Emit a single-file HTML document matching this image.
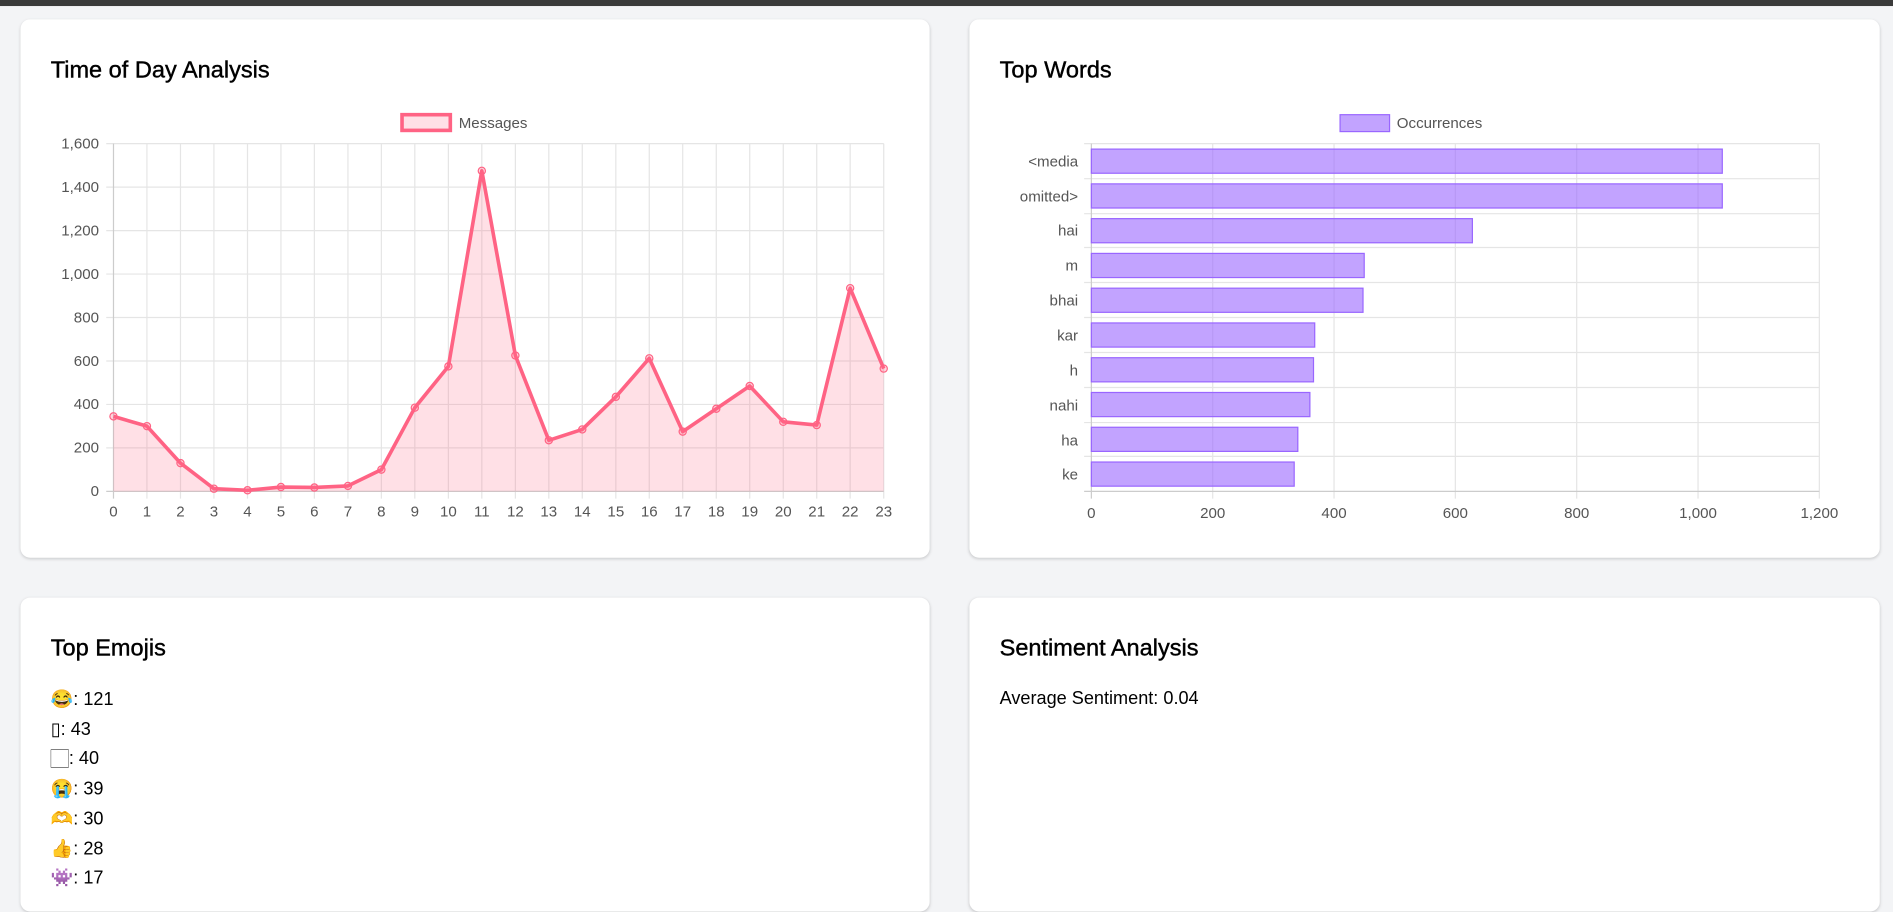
<!DOCTYPE html>
<html><head><meta charset="utf-8"><style>
html,body{margin:0;padding:0;background:#f3f4f6;overflow:hidden}
#w{position:absolute;left:0;top:0;width:1568px;height:731px;transform:scale(1.20727);transform-origin:0 0;background:#f3f4f6;font-family:"Liberation Sans",sans-serif}
.bar{position:absolute;left:0;top:0;width:1568px;height:5px;background:#3a3a3a}
.card{position:absolute;background:#fff;border-radius:8px;box-shadow:0 1px 3px rgba(0,0,0,.12),0 1px 2px rgba(0,0,0,.06)}
h2{position:absolute;left:25px;top:31px;margin:0;font-size:19.5px;font-weight:normal;color:#000;-webkit-text-stroke:0.35px #000}
.t{position:absolute;left:25px;font-size:15px;color:#000}
svg{position:absolute;left:0;top:0}
svg text{font-family:"Liberation Sans",sans-serif;font-size:12.5px;fill:#555}
</style></head><body><div id="w">
<div class="bar"></div>
<div class="card" style="left:17px;top:16px;width:753px;height:446px"><h2>Time of Day Analysis</h2></div>
<div class="card" style="left:803px;top:16px;width:754px;height:446px"><h2>Top Words</h2></div>
<div class="card" style="left:17px;top:495px;width:753px;height:260px"><h2>Top Emojis</h2>
<div class="t" style="top:75px">😂: 121</div>
<div class="t" style="top:100px">▯: 43</div>
<div class="t" style="top:125px">🏻: 40</div>
<div class="t" style="top:149px">😭: 39</div>
<div class="t" style="top:174px">🫶: 30</div>
<div class="t" style="top:199px">👍: 28</div>
<div class="t" style="top:223px">👾: 17</div>
</div>
<div class="card" style="left:803px;top:495px;width:754px;height:260px"><h2>Sentiment Analysis</h2>
<div class="t" style="top:75px">Average Sentiment: 0.04</div></div>

<svg width="1568" height="731">
<g stroke="#e5e5e5" stroke-width="1">
<line x1="88" y1="119" x2="732" y2="119"/><line x1="88" y1="155" x2="732" y2="155"/><line x1="88" y1="191" x2="732" y2="191"/><line x1="88" y1="227" x2="732" y2="227"/><line x1="88" y1="263" x2="732" y2="263"/><line x1="88" y1="299" x2="732" y2="299"/><line x1="88" y1="335" x2="732" y2="335"/><line x1="88" y1="371" x2="732" y2="371"/>
<line x1="121.7" y1="119" x2="121.7" y2="413"/><line x1="149.5" y1="119" x2="149.5" y2="413"/><line x1="177.2" y1="119" x2="177.2" y2="413"/><line x1="205" y1="119" x2="205" y2="413"/><line x1="232.7" y1="119" x2="232.7" y2="413"/><line x1="260.4" y1="119" x2="260.4" y2="413"/><line x1="288.2" y1="119" x2="288.2" y2="413"/><line x1="315.9" y1="119" x2="315.9" y2="413"/><line x1="343.6" y1="119" x2="343.6" y2="413"/><line x1="371.4" y1="119" x2="371.4" y2="413"/><line x1="399.1" y1="119" x2="399.1" y2="413"/><line x1="426.9" y1="119" x2="426.9" y2="413"/><line x1="454.6" y1="119" x2="454.6" y2="413"/><line x1="482.3" y1="119" x2="482.3" y2="413"/><line x1="510.1" y1="119" x2="510.1" y2="413"/><line x1="537.8" y1="119" x2="537.8" y2="413"/><line x1="565.5" y1="119" x2="565.5" y2="413"/><line x1="593.3" y1="119" x2="593.3" y2="413"/><line x1="621" y1="119" x2="621" y2="413"/><line x1="648.8" y1="119" x2="648.8" y2="413"/><line x1="676.5" y1="119" x2="676.5" y2="413"/><line x1="704.2" y1="119" x2="704.2" y2="413"/><line x1="732" y1="119" x2="732" y2="413"/>
</g>
<line x1="94" y1="119" x2="94" y2="413" stroke="#ccc"/><line x1="88" y1="407" x2="732" y2="407" stroke="#ccc"/>
<polygon fill="rgba(255,99,132,0.2)" points="94,407 94,344.9 121.7,353 149.5,383.6 177.2,404.8 205,406.1 232.7,403.4 260.4,403.8 288.2,402.5 315.9,389 343.6,337.7 371.4,303.5 399.1,141.5 426.9,294.5 454.6,364.7 482.3,355.7 510.1,328.7 537.8,296.8 565.5,357.5 593.3,338.6 621,319.7 648.8,349.4 676.5,352.1 704.2,238.7 732,305.3 732,407"/>
<polyline fill="none" stroke="#ff6384" stroke-width="3" stroke-linejoin="round" points="94,344.9 121.7,353 149.5,383.6 177.2,404.8 205,406.1 232.7,403.4 260.4,403.8 288.2,402.5 315.9,389 343.6,337.7 371.4,303.5 399.1,141.5 426.9,294.5 454.6,364.7 482.3,355.7 510.1,328.7 537.8,296.8 565.5,357.5 593.3,338.6 621,319.7 648.8,349.4 676.5,352.1 704.2,238.7 732,305.3"/>
<g fill="rgba(255,99,132,0.25)" stroke="#ff6384" stroke-width="1">
<circle cx="94" cy="344.9" r="3"/><circle cx="121.7" cy="353" r="3"/><circle cx="149.5" cy="383.6" r="3"/><circle cx="177.2" cy="404.8" r="3"/><circle cx="205" cy="406.1" r="3"/><circle cx="232.7" cy="403.4" r="3"/><circle cx="260.4" cy="403.8" r="3"/><circle cx="288.2" cy="402.5" r="3"/><circle cx="315.9" cy="389" r="3"/><circle cx="343.6" cy="337.7" r="3"/><circle cx="371.4" cy="303.5" r="3"/><circle cx="399.1" cy="141.5" r="3"/><circle cx="426.9" cy="294.5" r="3"/><circle cx="454.6" cy="364.7" r="3"/><circle cx="482.3" cy="355.7" r="3"/><circle cx="510.1" cy="328.7" r="3"/><circle cx="537.8" cy="296.8" r="3"/><circle cx="565.5" cy="357.5" r="3"/><circle cx="593.3" cy="338.6" r="3"/><circle cx="621" cy="319.7" r="3"/><circle cx="648.8" cy="349.4" r="3"/><circle cx="676.5" cy="352.1" r="3"/><circle cx="704.2" cy="238.7" r="3"/><circle cx="732" cy="305.3" r="3"/>
</g>
<rect x="333" y="95" width="40" height="13" fill="rgba(255,99,132,0.2)" stroke="#ff6384" stroke-width="3"/>
<text x="380" y="106">Messages</text>
<g text-anchor="end">
<text x="82" y="123">1,600</text><text x="82" y="159">1,400</text><text x="82" y="195">1,200</text><text x="82" y="231">1,000</text><text x="82" y="267">800</text><text x="82" y="303">600</text><text x="82" y="339">400</text><text x="82" y="375">200</text><text x="82" y="411">0</text>
</g>
<g text-anchor="middle">
<text x="94" y="428">0</text><text x="121.7" y="428">1</text><text x="149.5" y="428">2</text><text x="177.2" y="428">3</text><text x="205" y="428">4</text><text x="232.7" y="428">5</text><text x="260.4" y="428">6</text><text x="288.2" y="428">7</text><text x="315.9" y="428">8</text><text x="343.6" y="428">9</text><text x="371.4" y="428">10</text><text x="399.1" y="428">11</text><text x="426.9" y="428">12</text><text x="454.6" y="428">13</text><text x="482.3" y="428">14</text><text x="510.1" y="428">15</text><text x="537.8" y="428">16</text><text x="565.5" y="428">17</text><text x="593.3" y="428">18</text><text x="621" y="428">19</text><text x="648.8" y="428">20</text><text x="676.5" y="428">21</text><text x="704.2" y="428">22</text><text x="732" y="428">23</text>
</g>

<g stroke="#e5e5e5" stroke-width="1">
<line x1="898" y1="119" x2="1507" y2="119"/><line x1="898" y1="148" x2="1507" y2="148"/><line x1="898" y1="177" x2="1507" y2="177"/><line x1="898" y1="205" x2="1507" y2="205"/><line x1="898" y1="234" x2="1507" y2="234"/><line x1="898" y1="263" x2="1507" y2="263"/><line x1="898" y1="292" x2="1507" y2="292"/><line x1="898" y1="321" x2="1507" y2="321"/><line x1="898" y1="350" x2="1507" y2="350"/><line x1="898" y1="378" x2="1507" y2="378"/>
<line x1="1004.5" y1="119" x2="1004.5" y2="413"/><line x1="1105" y1="119" x2="1105" y2="413"/><line x1="1205.5" y1="119" x2="1205.5" y2="413"/><line x1="1306" y1="119" x2="1306" y2="413"/><line x1="1406.5" y1="119" x2="1406.5" y2="413"/><line x1="1507" y1="119" x2="1507" y2="413"/>
</g>
<line x1="904" y1="119" x2="904" y2="413" stroke="#ccc"/><line x1="898" y1="407" x2="1507" y2="407" stroke="#ccc"/>
<g fill="rgba(153,102,255,0.6)" stroke="#9966ff" stroke-width="1">
<rect x="904" y="123.5" width="522.6" height="20"/><rect x="904" y="152.3" width="522.6" height="20"/><rect x="904" y="181.1" width="315.6" height="20"/><rect x="904" y="209.9" width="226" height="20"/><rect x="904" y="238.7" width="225" height="20"/><rect x="904" y="267.5" width="185" height="20"/><rect x="904" y="296.3" width="184" height="20"/><rect x="904" y="325.1" width="181" height="20"/><rect x="904" y="353.9" width="171" height="20"/><rect x="904" y="382.7" width="168" height="20"/>
</g>
<rect x="1110" y="95" width="41" height="14" fill="rgba(153,102,255,0.6)" stroke="#9966ff"/>
<text x="1157" y="106">Occurrences</text>
<g text-anchor="end">
<text x="893" y="138">&lt;media</text><text x="893" y="167">omitted&gt;</text><text x="893" y="195">hai</text><text x="893" y="224">m</text><text x="893" y="253">bhai</text><text x="893" y="282">kar</text><text x="893" y="311">h</text><text x="893" y="340">nahi</text><text x="893" y="369">ha</text><text x="893" y="397">ke</text>
</g>
<g text-anchor="middle">
<text x="904" y="429">0</text><text x="1004.5" y="429">200</text><text x="1105" y="429">400</text><text x="1205.5" y="429">600</text><text x="1306" y="429">800</text><text x="1406.5" y="429">1,000</text><text x="1507" y="429">1,200</text>
</g>
</svg>
</div></body></html>
